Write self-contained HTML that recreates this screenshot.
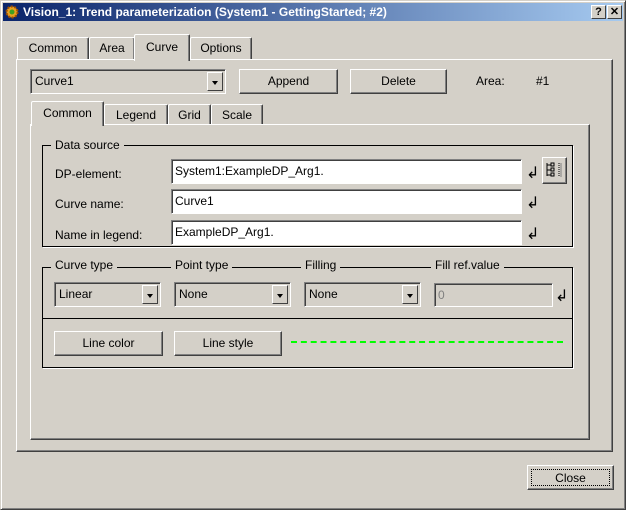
<!DOCTYPE html>
<html><head><style>
*{box-sizing:border-box;margin:0;padding:0}
body{width:626px;height:510px;background:#d4d0c8;font-family:"Liberation Sans",sans-serif;font-size:12px;color:#000;position:relative;overflow:hidden}
.a{position:absolute}
.win{left:0;top:0;width:626px;height:510px;border:1px solid;border-color:#d4d0c8 #404040 #404040 #d4d0c8;box-shadow:inset 1px 1px #fff,inset -1px -1px #808080}
.title{left:3px;top:3px;width:620px;height:18px;background:linear-gradient(90deg,#0a246a,#a6caf0);color:#fff;font-weight:bold;font-size:12px;line-height:18px;padding-left:20px}
.tb{width:15px;height:14px;top:5px;background:#d4d0c8;border:1px solid;border-color:#fff #404040 #404040 #fff;font-weight:bold;font-size:11px;line-height:12px;text-align:center;color:#000}
.raised{border:1px solid;border-color:#fff #404040 #404040 #fff;box-shadow:inset -1px -1px #808080}
.pane{border:1px solid;border-color:#fff #404040 #404040 #fff;box-shadow:inset -1px -1px #808080}
.tab{border:1px solid;border-bottom:none;border-color:#fff #404040 #404040 #fff;box-shadow:inset -1px 0 #808080;background:#d4d0c8;text-align:center;line-height:20px;border-radius:2px 2px 0 0}
.sunk{background:#fff;border:1px solid;border-color:#808080 #fff #fff #808080;box-shadow:inset 1px 1px #404040;padding-left:3px;line-height:22px}
.combo{border:1px solid;border-color:#808080 #fff #fff #808080;box-shadow:inset 1px 1px #404040;padding-left:4px;line-height:22px;background:#d4d0c8}
.arr{position:absolute;right:2px;top:2px;width:16px;bottom:2px;background:#d4d0c8;border:1px solid;border-color:#fff #404040 #404040 #fff}
.arr:after{content:"";position:absolute;left:4px;top:8px;border:3.5px solid transparent;border-top:4px solid #000}
.btn{text-align:center;line-height:22px}
.grp{border:1px solid #000;box-shadow:1px 1px #fff}
.lg{background:#d4d0c8;padding:0 4px;line-height:14px}
.ret{font-size:16px;line-height:16px}
</style></head><body>
<div class="a win"></div>
<div class="a title">Vision_1: Trend parameterization (System1 - GettingStarted; #2)</div>
<svg class="a" style="left:5px;top:5px" width="14" height="14" viewBox="0 0 14 14"><circle cx="7" cy="7" r="5.5" fill="#e8a020" stroke="#a05000" stroke-dasharray="2 1.5" stroke-width="2"/><circle cx="7" cy="7" r="2.5" fill="#40a020"/></svg>
<div class="a tb" style="left:591px">?</div>
<div class="a tb" style="left:607px">✕</div>

<div class="a pane" style="left:16px;top:59px;width:597px;height:393px"></div>
<div class="a tab" style="left:17px;top:37px;width:72px;height:22px">Common</div>
<div class="a tab" style="left:89px;top:37px;width:46px;height:22px">Area</div>
<div class="a tab" style="left:190px;top:37px;width:62px;height:22px">Options</div>
<div class="a tab" style="left:134px;top:34px;width:56px;height:27px;line-height:24px">Curve</div>

<div class="a combo" style="left:30px;top:69px;width:196px;height:25px">Curve1<div class="arr"></div></div>
<div class="a raised btn" style="left:239px;top:69px;width:99px;height:25px">Append</div>
<div class="a raised btn" style="left:350px;top:69px;width:97px;height:25px">Delete</div>
<div class="a" style="left:476px;top:74px">Area:</div>
<div class="a" style="left:536px;top:74px">#1</div>

<div class="a pane" style="left:30px;top:124px;width:560px;height:316px"></div>
<div class="a tab" style="left:104px;top:104px;width:64px;height:20px">Legend</div>
<div class="a tab" style="left:168px;top:104px;width:43px;height:20px">Grid</div>
<div class="a tab" style="left:211px;top:104px;width:52px;height:20px">Scale</div>
<div class="a tab" style="left:31px;top:101px;width:73px;height:25px;line-height:22px">Common</div>

<div class="a grp" style="left:42px;top:145px;width:531px;height:102px"></div>
<div class="a lg" style="left:51px;top:138px">Data source</div>
<div class="a" style="left:55px;top:167px">DP-element:</div>
<div class="a" style="left:55px;top:197px">Curve name:</div>
<div class="a" style="left:55px;top:228px">Name in legend:</div>
<div class="a sunk" style="left:171px;top:159px;width:351px;height:25px">System1:ExampleDP_Arg1.</div>
<div class="a sunk" style="left:171px;top:189px;width:351px;height:25px">Curve1</div>
<div class="a sunk" style="left:171px;top:220px;width:351px;height:25px">ExampleDP_Arg1.</div>
<div class="a ret" style="left:526px;top:166px">↲</div>
<div class="a ret" style="left:526px;top:196px">↲</div>
<div class="a ret" style="left:526px;top:227px">↲</div>
<div class="a raised" style="left:542px;top:157px;width:25px;height:27px">
<svg width="23" height="25" viewBox="0 0 23 25"><path d="M4 5v13M4 7h4M4 12h4M4 17h4" stroke="#000" fill="none"/><path d="M8 5h3v3h-3zM8 10h3v3h-3zM8 15h3v3h-3z" fill="none" stroke="#000"/><path d="M16 5v14" stroke="#000" stroke-dasharray="1 1"/><path d="M18 5v14" stroke="#808080"/></svg></div>

<div class="a grp" style="left:42px;top:267px;width:531px;height:101px"></div>
<div class="a" style="left:42px;top:318px;width:531px;height:1px;background:#000"></div>
<div class="a lg" style="left:51px;top:258px">Curve type</div>
<div class="a lg" style="left:171px;top:258px">Point type</div>
<div class="a lg" style="left:301px;top:258px">Filling</div>
<div class="a lg" style="left:431px;top:258px">Fill ref.value</div>
<div class="a combo" style="left:54px;top:282px;width:107px;height:25px">Linear<div class="arr"></div></div>
<div class="a combo" style="left:174px;top:282px;width:117px;height:25px">None<div class="arr"></div></div>
<div class="a combo" style="left:304px;top:282px;width:117px;height:25px">None<div class="arr"></div></div>
<div class="a sunk" style="left:434px;top:283px;width:119px;height:24px;background:#d4d0c8;color:#808080">0</div>
<div class="a ret" style="left:555px;top:289px">↲</div>
<div class="a raised btn" style="left:54px;top:331px;width:109px;height:25px">Line color</div>
<div class="a raised btn" style="left:174px;top:331px;width:108px;height:25px">Line style</div>
<div class="a" style="left:291px;top:341px;width:272px;height:0;border-top:2px dashed #00ff00"></div>

<div class="a raised btn" style="left:527px;top:465px;width:87px;height:25px"><div style="position:absolute;left:3px;top:3px;right:3px;bottom:3px;border:1px dotted #000;line-height:16px">Close</div></div>
</body></html>
